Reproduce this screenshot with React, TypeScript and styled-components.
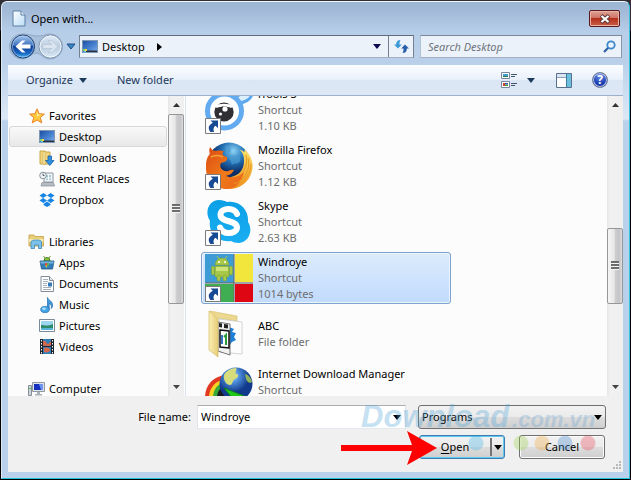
import React from "react";
import styled, { createGlobalStyle, css } from "styled-components";

const Global = createGlobalStyle`
  * { box-sizing: border-box; }
  html, body { margin: 0; background: #000; }
  body, button, input, select {
    font-family: "Noto Sans", "Open Sans", sans-serif;
    font-size: 11px;
    line-height: 16px;
    color: #000;
  }
  button { padding: 0; border: 0; background: none; text-align: left; white-space: nowrap; }
  ul { list-style: none; margin: 0; padding: 0; }
  svg { display: block; flex: none; }
`;

/* ---------- window frame ---------- */

const Backdrop = styled.div`
  height: 100vh;
  padding: 1px;
  background: linear-gradient(#322e36, #322e36 30px, #000 31px);
`;

const Frame = styled.main`
  height: 100%;
  display: flex;
  flex-direction: column;
  padding: 0 6px 6px;
  border: 1px solid;
  border-color: #f2f7fc #35c4e0 #22c3d8 #dce9f6;
  border-radius: 6px 6px 0 0;
  background: linear-gradient(#9cb5d3 0, #a3bbd8 10px, #b7cee9 30px, #bad0ea 60px, #dce8f6 117px, #b9d1ea 119px);
`;

const TitleBar = styled.header`
  display: flex;
  align-items: center;
  height: 33px;
  padding: 0 3px 0 4px;
`;

const Title = styled.h1`
  flex: 1;
  margin: 0 0 0 5px;
  font-size: 11px;
  font-weight: 400;
`;

const CloseButton = styled.button`
  display: grid;
  place-items: center;
  width: 31px;
  height: 17px;
  border: 1px solid #5c1a1c;
  border-radius: 2px;
  background: linear-gradient(#dba395, #cf7263 48%, #b5301c 50%, #c8604a);
  box-shadow: inset 0 0 0 1px #e6b3a6;
`;

const NavBar = styled.div`
  display: flex;
  align-items: center;
  height: 23px;
  padding: 0 1px;
`;

const NavButtons = styled.div`
  display: flex;
  align-items: center;
  width: 70px;
`;

const Address = styled.div`
  flex: 333;
  display: flex;
  align-items: center;
  height: 23px;
  border: 1px solid;
  border-color: #5f6d7e #74808e #a3afbf;
  background: #ecf2fa;
`;

const Crumb = styled.button`
  display: flex;
  align-items: center;
  gap: 4px;
  flex: 1;
  height: 100%;
  padding-left: 2px;
`;

const CrumbName = styled.span`
  margin-right: 8px;
`;

const AddressButton = styled.button<{ $divided?: boolean }>`
  display: grid;
  place-items: center;
  width: ${(p) => (p.$divided ? 25 : 22)}px;
  height: 100%;
  ${(p) => p.$divided && css`border-left: 1px solid #74808e;`}
`;

const SearchBox = styled.label`
  flex: 188;
  display: flex;
  align-items: center;
  height: 23px;
  min-width: 0;
  margin-left: 6px;
  padding: 0 5px 0 7px;
  border: 1px solid;
  border-color: #7b8898 #8b97a6 #a3afbf #b4c2d3;
  background: #ecf2fa;
`;

const SearchInput = styled.input`
  flex: 1;
  min-width: 0;
  padding: 0;
  border: 0;
  outline: 0;
  background: none;
  font-style: italic;
  &::placeholder { color: #6f747b; opacity: 1; }
`;

/* ---------- body ---------- */

const Body = styled.div`
  flex: 1;
  min-height: 0;
  display: flex;
  flex-direction: column;
  margin-top: 7px;
  background: #f0f0f0;
`;

const Toolbar = styled.div`
  display: flex;
  align-items: center;
  height: 31px;
  padding: 0 15px 0 18px;
  border-bottom: 1px solid #9fb0cd;
  background: linear-gradient(#fbfdff, #eaf1fa 48%, #dbe6f4 50%, #dde7f5);
`;

const ToolButton = styled.button<{ $gap: number }>`
  display: flex;
  align-items: center;
  gap: 6px;
  margin-right: ${(p) => p.$gap}px;
  color: #1e395b;
`;

const Spacer = styled.div`
  flex: 1;
`;

const Panes = styled.div`
  flex: 1;
  min-height: 0;
  display: flex;
  background: #fcfcfc;
`;

const NavPane = styled.nav`
  display: flex;
  width: 178px;
  padding-right: 1px;
  border-right: 1px solid #dbe4f1;
`;

const Tree = styled.div`
  flex: 1;
  display: flex;
  flex-direction: column;
  gap: 21px;
  padding: 9px 1px 0;
  overflow: hidden;
`;

const TreeRow = styled.button<{ $child?: boolean; $selected?: boolean }>`
  display: flex;
  align-items: center;
  gap: 4px;
  width: 100%;
  height: 21px;
  padding-left: ${(p) => (p.$child ? 28 : 18)}px;
  border: 1px solid transparent;
  border-radius: 3px;
  ${(p) =>
    p.$selected &&
    css`
      border-color: #d9d9d9;
      background: linear-gradient(#f9f9f9, #e8e8e8);
    `}
`;

const FileList = styled.ul`
  flex: 1;
  display: flex;
  flex-direction: column;
  gap: 4px;
  padding-left: 15px;
  overflow: hidden;
  & > :first-child { margin-top: -12px; }
`;

const Tile = styled.button<{ $selected?: boolean }>`
  display: flex;
  align-items: center;
  gap: 5px;
  width: 250px;
  height: 52px;
  padding-left: 3px;
  border: 1px solid transparent;
  border-radius: 3px;
  ${(p) =>
    p.$selected &&
    css`
      border-color: #7da2ce;
      background: linear-gradient(#dcebfc, #c1dbfc);
      box-shadow: inset 0 0 0 1px #ebf4fd;
    `}
`;

const TileText = styled.span`
  display: flex;
  flex-direction: column;
`;

const Detail = styled.span`
  min-height: 16px;
  color: #6d6d6d;
`;

/* ---------- scroll bars ---------- */

const Track = styled.div`
  display: flex;
  flex-direction: column;
  width: 16px;
  background: linear-gradient(90deg, #e6e6e6, #f1f1f1 3px, #efefef);
`;

const ScrollArrow = styled.button`
  display: grid;
  place-items: center;
  height: 18px;
`;

const Travel = styled.div<{ $grow: number }>`
  flex: ${(p) => p.$grow};
`;

const Thumb = styled.div<{ $grow: number }>`
  flex: ${(p) => p.$grow};
  display: grid;
  place-items: center;
  border: 1px solid #979797;
  border-radius: 2px;
  background: linear-gradient(90deg, #f5f5f5, #e6e6e8 45%, #cfcfd2 50%, #c4c4c8 80%, #dcdcde);
`;

const ScrollBar = ({ before, size, after }: { before: number; size: number; after: number }) => (
  <Track>
    <ScrollArrow aria-label="Scroll up">
      <svg width="7" height="4"><path d="M0 4 3.500 0 7 4z" fill="#333" /></svg>
    </ScrollArrow>
    <Travel $grow={before} />
    <Thumb $grow={size}>
      <svg width="8" height="9" shapeRendering="crispEdges">
        <path d="M0 0h8v2H0zM0 3h8v2H0zM0 6h8v2H0z" fill="#6c6c6e" />
        <path d="M0 2h8v1H0zM0 5h8v1H0zM0 8h8v1H0z" fill="#f4f4f4" />
      </svg>
    </Thumb>
    <Travel $grow={after} />
    <ScrollArrow aria-label="Scroll down">
      <svg width="7" height="4"><path d="M0 0h7L3.500 4z" fill="#444" /></svg>
    </ScrollArrow>
  </Track>
);

/* ---------- bottom form ---------- */

const Footer = styled.form`
  position: relative;
  height: 76px;
  padding: 9px 17px 0 0;
`;

const FormRow = styled.div`
  display: flex;
  align-items: center;
  justify-content: flex-end;
  height: 24px;
  margin-bottom: 6px;
`;

const FieldLabel = styled.label`
  width: 183px;
  margin-right: 6px;
  text-align: right;
`;

const Accel = styled.span`
  text-decoration: underline;
  text-underline-offset: 2px;
`;

const ComboBox = styled.div`
  flex: 1;
  display: flex;
  align-items: center;
  height: 24px;
  min-width: 0;
  margin-right: 12px;
  border: 1px solid;
  border-color: #abadb3 #e2e3ea #e3e9ef #e2e3ea;
  background: #fff;
`;

const ComboInput = styled.input`
  flex: 1;
  min-width: 0;
  padding: 0 3px;
  border: 0;
  outline: 0;
  background: none;
`;

const DropArrow = styled.button`
  display: grid;
  place-items: center;
  width: 17px;
  height: 100%;
`;

const TypeSelect = styled.select`
  appearance: none;
  width: 188px;
  height: 24px;
  padding: 0 3px;
  border: 1px solid #707070;
  border-radius: 3px;
  outline: 0;
  background: linear-gradient(#f2f2f2, #ebebeb 48%, #dddddd 50%, #cfcfcf);
`;

const SelectWrap = styled.div`
  display: grid;
  align-items: center;
  & > * { grid-area: 1 / 1; }
  & > svg { justify-self: end; margin-right: 4px; pointer-events: none; }
`;

const pushFace = css`
  height: 24px;
  border: 1px solid #707070;
  border-radius: 3px;
  background: linear-gradient(#f2f2f2, #ebebeb 48%, #dddddd 50%, #cfcfcf);
  box-shadow: inset 0 0 0 1px #fbfbfb;
`;

const SplitButton = styled.div`
  ${pushFace}
  display: flex;
  width: 86px;
  margin-right: 14px;
  border-color: #3c7fb1;
  box-shadow: inset 0 0 0 1px #5fc8f0;
`;

const SplitMain = styled.button`
  flex: 1;
  text-align: center;
`;

const SplitMore = styled.button`
  display: grid;
  place-items: center;
  width: 14px;
  margin: 2px 0;
  border-left: 2px solid #747474;
`;

const PushButton = styled.button`
  ${pushFace}
  width: 86px;
  margin-right: 1px;
  text-align: center;
`;

const Watermark = styled.div`
  position: absolute;
  right: 18px;
  top: 0;
  width: 246px;
  height: 60px;
  pointer-events: none;
  opacity: 0.32;
`;

const Brand = styled.div`
  display: flex;
  align-items: baseline;
  gap: 3px;
  height: 38px;
  padding: 7px 0 0 2px;
  color: #6ea6d2;
  font-family: "Liberation Sans", sans-serif;
  font-size: 22px;
  line-height: 28px;
  font-weight: 700;
  font-style: italic;
`;

const BrandBig = styled.span`
  font-size: 31px;
  color: #4da3d8;
`;

const Dots = styled.svg`
  width: 246px;
  height: 18px;
`;

const Pointer = styled.svg`
  position: absolute;
  right: 186px;
  top: 35px;
  width: 96px;
  height: 34px;
  pointer-events: none;
`;

const Grip = styled.svg`
  position: absolute;
  right: 2px;
  bottom: 2px;
  width: 9px;
  height: 9px;
`;

/* ---------- icons ---------- */

const Down = ({ color = "#000" }: { color?: string }) => (
  <svg width="8" height="5"><path d="M0 0h8L4 5z" fill={color} /></svg>
);

const PageIcon = () => (
  <svg width="14" height="17" viewBox="0 0 14 17">
    <defs><linearGradient id="pg" x2="1" y2="1"><stop stopColor="#fff" /><stop offset="1" stopColor="#b9dcf5" /></linearGradient></defs>
    <path d="M1 1h8l4 4v11H1z" fill="url(#pg)" stroke="#5b7fa6" />
    <path d="M9 1v4h4" fill="#e8f4fd" stroke="#5b7fa6" />
  </svg>
);

const BackForward = () => (
  <svg width="54" height="27" viewBox="0 0 54 27">
    <defs>
      <linearGradient id="bk" x2="0" y2="1"><stop stopColor="#a9c9ee" /><stop offset=".45" stopColor="#3f74c0" /><stop offset=".5" stopColor="#0d3e96" /><stop offset=".8" stopColor="#1a67c4" /><stop offset="1" stopColor="#48c1f4" /></linearGradient>
      <linearGradient id="fw" x2="0" y2="1"><stop stopColor="#e3edf8" /><stop offset=".5" stopColor="#b9cce0" /><stop offset="1" stopColor="#dbe8f5" /></linearGradient>
    </defs>
    <path d="M13 1C22 1 22 3 29 3S36 1 41 1a12 12 0 0 1 0 25C34 26 32 20 27 20S20 26 13 26A12 12 0 0 1 13 1z" fill="#a9c0da" stroke="#8fa7c3" />
    <circle cx="14" cy="13.500" r="11.500" fill="url(#bk)" stroke="#203d70" />
    <circle cx="14" cy="13.500" r="10.500" fill="none" stroke="#b8d6f3" strokeOpacity=".6" />
    <path d="M6.500 13.500 13 7.500h3.500L12.500 11.500H21.500v4H12.500l4 4H13z" fill="#fff" />
    <circle cx="41.500" cy="13.500" r="11.500" fill="url(#fw)" stroke="#7f95ae" />
    <circle cx="41.500" cy="13.500" r="10.500" fill="none" stroke="#eef5fc" />
    <path d="M49 13.500 42.500 7.500H39L43 11.500H34v4h9l-4 4h3.500z" fill="#dbe5f0" stroke="#b4c4d6" strokeWidth=".7" />
  </svg>
);

const DesktopIcon = () => (
  <svg width="16" height="13" viewBox="0 0 16 13">
    <defs><linearGradient id="dk" x2="1" y2="1"><stop stopColor="#1c4ca0" /><stop offset=".6" stopColor="#4a86d4" /><stop offset="1" stopColor="#86b2e6" /></linearGradient></defs>
    <rect x=".5" y=".5" width="15" height="12" fill="url(#dk)" stroke="#7d97b5" />
    <path d="M3 10.500h12V12H3z" fill="#2c3340" />
    <path d="M1 9h2v2H1z" fill="#7dd06a" /><path d="M3 9h2v2H3z" fill="#f3d73c" /><path d="M2 11h2v1.500H2z" fill="#5bc7f0" />
  </svg>
);

const RefreshIcon = () => (
  <svg width="15" height="13" viewBox="0 0 15 13">
    <path d="M6.500 0C3.500 0 2.200 1.500 2.200 4.500H0L4 8.500l3.800-4H5.500c0-2 .1-3 1-4.500z" fill="#3a9ad8" />
    <path d="M8.500 13c3 0 4.300-1.500 4.300-4.500H15l-4-4-3.800 4h2.300c0 2-.1 3-1 4.500z" fill="#285da8" />
  </svg>
);

const SearchIcon = () => (
  <svg width="13" height="13" viewBox="0 0 13 13">
    <path d="M1 12 5.500 7.500" stroke="#2b5f9e" strokeWidth="2.200" />
    <circle cx="8" cy="5" r="3.700" fill="#e9f4fd" stroke="#3f87c9" strokeWidth="1.800" />
  </svg>
);

const ViewIcon = () => (
  <svg width="17" height="16" viewBox="0 0 17 16">
    <path d="M.5.500h8v6h-8zM.5 9.500h8v6h-8z" fill="#fff" stroke="#77879b" />
    <path d="M2 2h5v3H2z" fill="#3c9fd6" /><path d="M2 4h5v1H2z" fill="#2f7a48" />
    <path d="M2 11h2v3H2z" fill="#d0402f" /><path d="M4 11h3v1.500H4z" fill="#2f55b5" /><path d="M4 12.500h3V14H4z" fill="#4aa13e" />
    <path d="M10 2.500h6M10 4.500h4M10 11.500h6M10 13.500h4" stroke="#43566e" />
  </svg>
);

const PreviewIcon = () => (
  <svg width="16" height="15" viewBox="0 0 16 15">
    <path d="M.5.500h15v14H.5z" fill="#fff" stroke="#58708e" />
    <path d="M1 1h9v3H1z" fill="#dbe6f2" /><path d="M1 4.500h9" stroke="#8ea3bb" />
    <path d="M10 1h5v13h-5z" fill="#6cc0de" /><path d="M10.500 1v13" stroke="#3d7ea0" />
  </svg>
);

const HelpMark = styled.span`
  display: grid;
  place-items: center;
  width: 16px;
  height: 16px;
  border: 1px solid #6d7b99;
  border-radius: 50%;
  background: radial-gradient(circle at 50% 20%, #6f8fe6, #1a3fb5 60%, #102a86);
  box-shadow: inset 0 0 0 1px #b9c6e6;
  color: #fff;
  font-weight: 700;
  font-size: 12px;
  line-height: 14px;
`;

const StarIcon = () => (
  <svg width="16" height="16" viewBox="0 0 16 16">
    <path d="m8 .8 2.100 5 5.300.3-4.100 3.500 1.500 5.300L8 12l-4.800 2.900 1.500-5.300L.6 6.100l5.300-.3z" fill="#ffc83d" stroke="#e8822a" />
    <path d="m8 3.500 1.200 3 3 .2L8 8.500z" fill="#fff0a0" />
  </svg>
);

const DownloadsIcon = () => (
  <svg width="16" height="16" viewBox="0 0 16 16">
    <path d="M1 1h5l1 1h4v12H1z" fill="#f0d57c" stroke="#c8a648" />
    <path d="M4 2.500 6 1v14l-2-1z" fill="#fbeeb4" stroke="#c8a648" strokeWidth=".6" />
    <path d="M9 6h3.500v4.500H15L10.800 15.500 6.500 10.500H9z" fill="#2f8fe0" stroke="#1c61a8" strokeWidth=".8" />
  </svg>
);

const RecentIcon = () => (
  <svg width="16" height="16" viewBox="0 0 16 16">
    <path d="M5 2h9v9H5z" fill="#f3f6f8" stroke="#8d979f" />
    <path d="M7 4h5v5H7z" fill="#9fc7d6" /><path d="M7 7h5M9.500 4v5" stroke="#fff" />
    <path d="M3 11.500h11.500l1 3.500H2z" fill="#b5bcc2" stroke="#858e95" strokeWidth=".7" />
    <circle cx="4" cy="4.500" r="3.300" fill="#eef2f5" stroke="#8b969f" /><path d="M4 2.500v2h1.500" fill="none" stroke="#55616b" />
  </svg>
);

const DropboxIcon = () => (
  <svg width="16" height="16" viewBox="0 0 16 16">
    <g fill="#1584e4">
      <path d="M4.500 1 8 3.500 4 6 .5 3.500zM11.500 1 8 3.500 12 6l3.500-2.500zM.5 8.500 4 6l4 2.500L4.500 11zM15.500 8.500 12 6 8 8.500l3.500 2.500z" />
      <path d="M8 9.500 4.500 12v1L8 15l3.500-2v-1z" />
    </g>
  </svg>
);

const LibrariesIcon = () => (
  <svg width="17" height="15" viewBox="0 0 17 15">
    <path d="M1 2.500V1h5l1 1.500h8.500V12H1z" fill="#e9cf78" stroke="#bf9d45" strokeWidth=".8" />
    <path d="M1 5h14.500v3H1z" fill="#f9eaae" />
    <path d="M3 8c0-1.500 2-2 5.500-2s5 .5 5 2v6.500h-3V11h-4v3.500H3z" fill="#7cc1ea" stroke="#3c88be" strokeWidth=".8" />
  </svg>
);

const AppsIcon = () => (
  <svg width="16" height="15" viewBox="0 0 16 15">
    <path d="M5 6a3 3.500 0 0 1 6 0z" fill="#8dc63f" stroke="#4c7d1e" /><path d="M4.500 1 6 3M11.500 1 10 3" stroke="#6b9a2d" />
    <path d="M1 6h14l-1.500 8h-11z" fill="#347fb8" stroke="#1d5585" strokeWidth=".8" /><path d="M1.500 6.500h13v2h-13z" fill="#74b4dd" />
    <path d="M6 8.500 8 8v2.500H6z" fill="#e7412d" /><path d="M8 8l2 .5v2H8z" fill="#67b346" /><path d="M6 10.500h2V13z" fill="#f4d52e" />
  </svg>
);

const DocumentsIcon = () => (
  <svg width="14" height="16" viewBox="0 0 14 16">
    <path d="M1 .500h8.500l4 4v11H1z" fill="#fff" stroke="#838d99" /><path d="M9.500.500v4h4" fill="#dfe8f0" stroke="#838d99" />
    <path d="M3 3.500h5M3 5.500h5M3 7.500h4M3 9.500h4M3 11.500h8M3 13.500h8" stroke="#a6b0bb" /><path d="M8 6.500h4v4H8z" fill="#3579b8" />
  </svg>
);

const MusicIcon = () => (
  <svg width="14" height="16" viewBox="0 0 14 16">
    <path d="M7.500 12.500V.500C8.500 3.500 13 4 12.500 9c-.2 1.500-.8 2-1.300 2.500.8-3-.2-4.500-2-5.200v6.200z" fill="#3f9bdd" stroke="#1e6cae" strokeWidth=".7" />
    <ellipse cx="5" cy="12.500" rx="4.300" ry="3.100" fill="#45a6e6" stroke="#1e6cae" strokeWidth=".7" />
    <ellipse cx="4" cy="11.800" rx="2" ry="1.200" fill="#a8dcfa" />
  </svg>
);

const PicturesIcon = () => (
  <svg width="16" height="13" viewBox="0 0 16 13">
    <path d="M.5.500h15v12H.5z" fill="#fff" stroke="#7d8a98" />
    <path d="M2 2h12v5H2z" fill="#9dd4ef" /><path d="M2 6c4 0 6 1.500 12-1v4H2z" fill="#2f8a6a" /><path d="M2 9h12v2H2z" fill="#56b5d8" />
  </svg>
);

const VideosIcon = () => (
  <svg width="14" height="15" viewBox="0 0 14 15">
    <path d="M0 0h14v15H0z" fill="#20262e" /><path d="M3 0h8v15H3z" fill="#2f7fb8" />
    <path d="M3 2c4-1 3 3 5 3s1-3 3-2v3c-2 2-5 0-8 1zM4 9c3-1 6 0 6 2s-3 3-6 2z" fill="#d4664c" />
    <path d="M3 7.500h8" stroke="#20262e" />
    <path d="M1.500 1v14M12.500 1v14" stroke="#f3f3f3" strokeDasharray="1.500 1.500" />
  </svg>
);

const ComputerIcon = () => (
  <svg width="17" height="14" viewBox="0 0 17 14">
    <path d="M4.500.500h12v9h-12z" fill="#dfe3e8" stroke="#8f98a3" /><path d="M6 2h9v6H6z" fill="#1530c0" /><path d="M11 2h4v6h-2z" fill="#6f94ee" />
    <path d="M9 10h3v2h2v1.500H7V12h2z" fill="#aab1ba" />
    <path d="M.5 3.500h3v10h-3z" fill="#cfd5db" stroke="#858e99" /><path d="M1 6h2v1H1z" fill="#48c240" />
  </svg>
);

const ShortcutBadge = () => (
  <g transform="translate(0 32)">
    <path d="M.5.500h15v15H.5z" fill="#fdfdfd" stroke="#7b7b7b" />
    <path d="M5.500 2.500H13V10l-2.500-2.300C8.500 9 8 11 9 14H5.500C2.500 10.500 3.500 7 7.800 4.800z" fill="#174a94" />
  </g>
);

const Big = ({ children, link }: { children: React.ReactNode; link?: boolean }) => (
  <svg width="48" height="48" viewBox="0 0 48 48">{children}{link && <ShortcutBadge />}</svg>
);

const IToolsArt = () => (
  <Big link>
    <path d="M29 13c5-6 13-7 18-5-1 5-7 9-14 9z" fill="#dcefff" stroke="#5ca8ee" strokeWidth="3" />
    <circle cx="19.500" cy="25" r="17" fill="#fff" stroke="#62abf0" strokeWidth="5" />
    <ellipse cx="19" cy="26" rx="9.700" ry="9.500" fill="#302f33" />
    <path d="M9 20c6-3 14-3 20 0l-3 2c-4-2-10-2-14 0z" fill="#fff" />
    <circle cx="20" cy="23" r="2.600" fill="#fff" /><circle cx="15.500" cy="28" r="1.600" fill="#fff" />
  </Big>
);

const FirefoxArt = () => (
  <Big link>
    <defs>
      <radialGradient id="ffb" cx=".6" cy=".2"><stop stopColor="#8fd4f5" /><stop offset=".5" stopColor="#2474b8" /><stop offset="1" stopColor="#0c2d66" /></radialGradient>
      <linearGradient id="ffo" x2="1" y2="1"><stop stopColor="#d94a12" /><stop offset=".55" stopColor="#f07a1a" /><stop offset="1" stopColor="#e8641a" /></linearGradient>
      <linearGradient id="ffy" x2="0" y2="1"><stop stopColor="#fbe36a" /><stop offset="1" stopColor="#f0901c" /></linearGradient>
    </defs>
    <circle cx="24" cy="22" r="21.500" fill="url(#ffb)" />
    <path d="M20 4c5 0 7 3 5 6s3 4 6 3 6 2 4 6-6 1-8 4" fill="#4a9bd2" opacity=".7" />
    <path d="M39 7c7 6 10 14 8 22-3 12-13 18-23 18l2-12c9-2 13-8 13-16 0-5-1-8-4-11 2 0 3 1 4 2 1-1 1-2 0-3z" fill="url(#ffy)" />
    <path d="M5 5c2 3 4 4 6 4 3-1 6 0 8 0-3 3-1 5 3 6 1 4-2 5-6 6-2 3 0 7 4 8 4 1 5-2 9-1-2 4-5 5-8 6 8 3 14 0 18-4-2 9-8 17-17 17C9 47 0 37 1 24c0-7 2-10 4-12-1-2-1-4 0-7z" fill="url(#ffo)" />
    <path d="M6 15c4-2 8-2 12 0" fill="none" stroke="#f8a43c" strokeWidth="1.500" />
    <path d="M43 16c3 11-3 22-14 26M46 22c0 9-6 17-13 21M41 13c2 9-1 17-8 21" stroke="#e89a22" fill="none" />
  </Big>
);

const SkypeArt = () => (
  <Big link>
    <defs><linearGradient id="sk" x2="0" y2="1"><stop stopColor="#0b9fe6" /><stop offset="1" stopColor="#1aaef2" /></linearGradient></defs>
    <path d="M14 2c4 0 6 1 8 2 13-2 22 8 21 20 5 7 2 20-9 21-4 0-6-1-8-2C12 45 3 34 5 23-1 14 4 2 14 2z" fill="url(#sk)" />
    <path d="M32 16c-1.500-3.500-4.500-5-8.500-5-4.500 0-8 2-8 5.800 0 8.200 16.500 4.700 16.500 12.700 0 3.500-4 5.500-8.500 5.500-4 0-7-1.800-8.500-5.500" fill="none" stroke="#fff" strokeWidth="6" strokeLinecap="round" />
  </Big>
);

const WindroyeArt = () => (
  <Big link>
    <path d="M0 0h29v29H0z" fill="#3d9bd6" /><path d="M30 0h18v28H30z" fill="#f2e63c" />
    <path d="M0 30h29v18H0z" fill="#3fae52" /><path d="M30 30h18v18H30z" fill="#df0614" />
    <path d="M29 0v48M0 29h48" stroke="#72685a" />
    <g fill="#a8c948" stroke="#7fa02f" strokeWidth=".6">
      <path d="M10 11a7 7 0 0 1 14 0z" /><rect x="10" y="12" width="14" height="11" rx="1.500" />
      <rect x="6.500" y="12" width="3" height="9" rx="1.500" /><rect x="24.500" y="12" width="3" height="9" rx="1.500" />
      <rect x="12" y="21" width="3.500" height="6" rx="1.500" /><rect x="18" y="21" width="3.500" height="6" rx="1.500" />
      <path d="m12 2 2 3M22 2l-2 3" stroke="#a8c948" strokeWidth="1" />
    </g>
    <circle cx="14" cy="8" r="1" fill="#fff" /><circle cx="20" cy="8" r="1" fill="#fff" />
    <path d="M11 13h12v4H11z" fill="#cfe37a" />
  </Big>
);

const FolderArt = () => (
  <Big>
    <defs><linearGradient id="fd" x2="1"><stop stopColor="#fbefb4" /><stop offset="1" stopColor="#e6cd78" /></linearGradient></defs>
    <path d="M5 1l27 5v5L12 8v34L5 40z" fill="#ecd88e" stroke="#d5bd6c" strokeWidth=".6" />
    <path d="M14 9l23 3v32l-23-2z" fill="#fdfdfd" stroke="#c8c8c8" strokeWidth=".8" />
    <path d="m24 17 5 2-2 3 4 1-2 4 2 3-4 2-3 4z" fill="#1f7fd6" />
    <path d="M13 12l12 2v31l-12-4z" fill="#f1f1f1" stroke="#555" strokeWidth=".8" />
    <path d="M14 13l3 .4v4l-3-.4zM19 14l4 .4v4l-4-.4z" fill="#222" /><path d="M15 20l9 1v17l-9-1z" fill="#fff" stroke="#111" strokeWidth="1.500" />
    <path d="M17 25v9" stroke="#3574c2" strokeWidth="2" /><path d="m19 27 2-2v10" stroke="#2a9b3c" strokeWidth="2" fill="none" />
    <path d="M4 1l9 8v38L4 40z" fill="url(#fd)" stroke="#d6bc66" strokeWidth=".7" />
  </Big>
);

const IdmArt = () => (
  <Big link>
    <defs><radialGradient id="gl" cx=".4" cy=".25"><stop stopColor="#c4e2fa" /><stop offset=".4" stopColor="#4d8edb" /><stop offset="1" stopColor="#123a8c" /></radialGradient></defs>
    <path d="M20 9C7 11 0 20 0 32h18V14z" fill="#e23a22" />
    <path d="M20 13C10 15 4 22 4 32h14z" fill="#f6d322" />
    <path d="M20 16c-8 2-12 8-12 16h10z" fill="#35a83a" />
    <path d="M18 21c-4 2-6 6-6 11h10V22z" fill="#161a1c" />
    <circle cx="31" cy="18" r="16.500" fill="url(#gl)" />
    <path d="M19 9c2-4 7-7 12-7 2 2-2 4 0 6 4 0 2 4-1 5s-2 6-5 6-7-4-6-10z" fill="#d8dd7c" />
    <path d="M40 8c4 1 6 4 7 8-2 2-5 0-6-3z" fill="#8fb25c" />
    <path d="M19 22l28 11v12H22l5-13z" fill="#20c51c" stroke="#0c7d12" strokeWidth=".8" />
  </Big>
);

/* ---------- data ---------- */

interface TreeItem {
  name: string;
  icon: React.ReactNode;
  selected?: boolean;
}

const groups: (TreeItem & { items: TreeItem[] })[] = [
  {
    name: "Favorites", icon: <StarIcon />,
    items: [
      { name: "Desktop", icon: <DesktopIcon />, selected: true },
      { name: "Downloads", icon: <DownloadsIcon /> },
      { name: "Recent Places", icon: <RecentIcon /> },
      { name: "Dropbox", icon: <DropboxIcon /> },
    ],
  },
  {
    name: "Libraries", icon: <LibrariesIcon />,
    items: [
      { name: "Apps", icon: <AppsIcon /> },
      { name: "Documents", icon: <DocumentsIcon /> },
      { name: "Music", icon: <MusicIcon /> },
      { name: "Pictures", icon: <PicturesIcon /> },
      { name: "Videos", icon: <VideosIcon /> },
    ],
  },
  { name: "Computer", icon: <ComputerIcon />, items: [] },
];

const files: { name: string; details: string[]; art: React.ReactNode; selected?: boolean }[] = [
  { name: "iTools 3", details: ["Shortcut", "1.10 KB"], art: <IToolsArt /> },
  { name: "Mozilla Firefox", details: ["Shortcut", "1.12 KB"], art: <FirefoxArt /> },
  { name: "Skype", details: ["Shortcut", "2.63 KB"], art: <SkypeArt /> },
  { name: "Windroye", details: ["Shortcut", "1014 bytes"], art: <WindroyeArt />, selected: true },
  { name: "ABC", details: ["File folder"], art: <FolderArt /> },
  { name: "Internet Download Manager", details: ["Shortcut", ""], art: <IdmArt /> },
];

const IconSlot = styled.span<{ $width?: number }>`
  display: grid;
  place-items: center;
  width: ${(p) => p.$width ?? 17}px;
`;

export default function App() {
  return (
    <Backdrop>
      <Global />
      <Frame>
        <TitleBar>
          <PageIcon />
          <Title>Open with...</Title>
          <CloseButton aria-label="Close">
            <svg width="12" height="10" viewBox="0 0 12 10">
              <path d="M2 1.500 10 8.500M10 1.500 2 8.500" stroke="#5a3a3c" strokeWidth="4" />
              <path d="M2.500 2 9.500 8M9.500 2 2.500 8" stroke="#fff" strokeWidth="2.200" />
            </svg>
          </CloseButton>
        </TitleBar>
        <NavBar>
          <NavButtons>
            <BackForward />
            <AddressButton aria-label="Recent pages">
              <svg width="10" height="7"><path d="M1 1h8L5 6z" fill="#3d86c4" stroke="#1f4f86" /></svg>
            </AddressButton>
          </NavButtons>
          <Address>
            <Crumb>
              <DesktopIcon />
              <CrumbName>Desktop</CrumbName>
              <svg width="5" height="8"><path d="M0 0v8l5-4z" fill="#000" /></svg>
            </Crumb>
            <AddressButton aria-label="Previous locations"><Down color="#0a0a50" /></AddressButton>
            <AddressButton $divided aria-label="Refresh"><RefreshIcon /></AddressButton>
          </Address>
          <SearchBox>
            <SearchInput placeholder="Search Desktop" aria-label="Search Desktop" />
            <SearchIcon />
          </SearchBox>
        </NavBar>
        <Body>
          <Toolbar>
            <ToolButton $gap={30}>Organize <Down color="#1e395b" /></ToolButton>
            <ToolButton $gap={0}>New folder</ToolButton>
            <Spacer />
            <ToolButton $gap={18} aria-label="Change view"><ViewIcon /><IconSlot $width={14}><Down color="#1e395b" /></IconSlot></ToolButton>
            <ToolButton $gap={20} aria-label="Preview pane"><PreviewIcon /></ToolButton>
            <ToolButton $gap={0} aria-label="Help"><HelpMark>?</HelpMark></ToolButton>
          </Toolbar>
          <Panes>
            <NavPane>
              <Tree>
                {groups.map((g) => (
                  <div key={g.name}>
                    <TreeRow><IconSlot>{g.icon}</IconSlot>{g.name}</TreeRow>
                    {g.items.map((i) => (
                      <TreeRow key={i.name} $child $selected={i.selected}>
                        <IconSlot>{i.icon}</IconSlot>{i.name}
                      </TreeRow>
                    ))}
                  </div>
                ))}
              </Tree>
              <ScrollBar before={0} size={189} after={75} />
            </NavPane>
            <FileList>
              {files.map((f) => (
                <li key={f.name}>
                  <Tile $selected={f.selected}>
                    {f.art}
                    <TileText>
                      {f.name}
                      {f.details.map((d) => <Detail key={d}>{d}</Detail>)}
                    </TileText>
                  </Tile>
                </li>
              ))}
            </FileList>
            <ScrollBar before={115} size={74} after={75} />
          </Panes>
          <Footer onSubmit={(e) => e.preventDefault()}>
            <FormRow>
              <FieldLabel htmlFor="file-name">File <Accel>n</Accel>ame:</FieldLabel>
              <ComboBox>
                <ComboInput id="file-name" defaultValue="Windroye" />
                <DropArrow type="button" aria-label="File name history"><Down /></DropArrow>
              </ComboBox>
              <SelectWrap>
                <TypeSelect aria-label="File type" defaultValue="Programs"><option>Programs</option></TypeSelect>
                <Down />
              </SelectWrap>
            </FormRow>
            <FormRow>
              <SplitButton>
                <SplitMain type="submit"><Accel>O</Accel>pen</SplitMain>
                <SplitMore type="button" aria-label="Open options"><Down /></SplitMore>
              </SplitButton>
              <PushButton type="button">Cancel</PushButton>
            </FormRow>
            <Watermark>
              <Brand><BrandBig>Download</BrandBig>.com.vn</Brand>
              <Dots viewBox="0 0 246 18">
                <circle cx="117" cy="9" r="7.500" fill="#3db3e8" /><circle cx="162" cy="9" r="7.500" fill="#9bcf4a" />
                <circle cx="183" cy="9" r="7.500" fill="#f5a83c" /><circle cx="206" cy="9" r="7.500" fill="#3f86cc" />
                <circle cx="229" cy="9" r="7.500" fill="#ea4152" />
              </Dots>
            </Watermark>
            <Pointer viewBox="0 0 96 34"><path d="M0 14h71L66 0l30 17-30 17 5-14H0z" fill="#fe0000" /></Pointer>
            <Grip viewBox="0 0 9 9">
              <path d="M7 0h2v2H7zM7 3h2v2H7zM4 3h2v2H4zM7 6h2v2H7zM4 6h2v2H4zM1 6h2v2H1z" fill="#b8b8b8" />
            </Grip>
          </Footer>
        </Body>
      </Frame>
    </Backdrop>
  );
}
